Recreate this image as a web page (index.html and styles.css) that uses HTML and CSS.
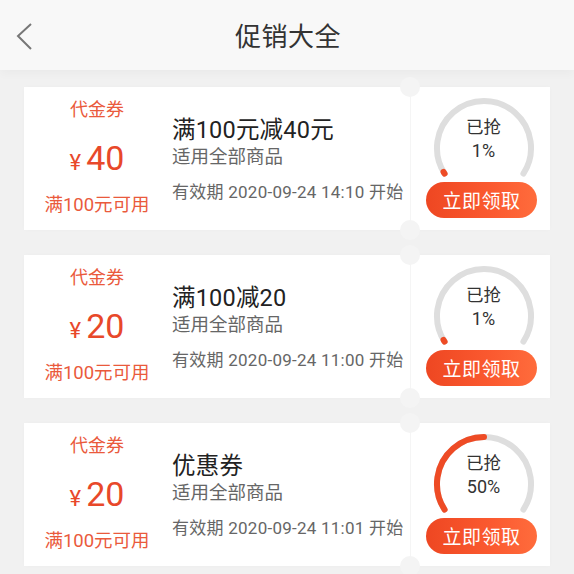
FILE: index.html
```html
<!DOCTYPE html>
<html lang="zh-CN">
<head>
<meta charset="utf-8">
<title>促销大全</title>
<link rel="stylesheet" href="styles.css">
</head>
<body>
<header class="topbar">
  <svg class="back" width="20" height="30" viewBox="0 0 20 30"><polyline points="15,2 2,14 15,27" fill="none" stroke="#777" stroke-width="2"/></svg>
  <h1 class="title">促销大全</h1>
</header>
<main class="list">
  <section class="card">
    <div class="left">
      <div class="kind">代金券</div>
      <div class="price"><span class="yen">¥</span><span class="num">40</span></div>
      <div class="cond">满100元可用</div>
    </div>
    <div class="mid">
      <div class="name">满100元减40元</div>
      <div class="scope">适用全部商品</div>
      <div class="valid">有效期 2020-09-24 14:10 开始</div>
    </div>
    <div class="stub">
      <div class="gauge">
        <svg class="ring" width="106" height="84" viewBox="0 0 106 84">
          <path d="M13.6 78.6 A47 47 0 1 1 92.4 78.6" pathLength="100" fill="none" stroke="#dedede" stroke-width="6" stroke-linecap="round"/>
          <path d="M13.6 78.6 A47 47 0 1 1 92.4 78.6" pathLength="100" fill="none" stroke="#ee4b25" stroke-width="6" stroke-linecap="round" stroke-dasharray="1 200"/>
        </svg>
        <div class="gtext"><span class="g1">已抢</span><span class="g2">1%</span></div>
      </div>
      <button class="btn">立即领取</button>
    </div>
    <i class="notch top"></i><i class="notch bottom"></i>
  </section>

  <section class="card">
    <div class="left">
      <div class="kind">代金券</div>
      <div class="price"><span class="yen">¥</span><span class="num">20</span></div>
      <div class="cond">满100元可用</div>
    </div>
    <div class="mid">
      <div class="name">满100减20</div>
      <div class="scope">适用全部商品</div>
      <div class="valid">有效期 2020-09-24 11:00 开始</div>
    </div>
    <div class="stub">
      <div class="gauge">
        <svg class="ring" width="106" height="84" viewBox="0 0 106 84">
          <path d="M13.6 78.6 A47 47 0 1 1 92.4 78.6" pathLength="100" fill="none" stroke="#dedede" stroke-width="6" stroke-linecap="round"/>
          <path d="M13.6 78.6 A47 47 0 1 1 92.4 78.6" pathLength="100" fill="none" stroke="#ee4b25" stroke-width="6" stroke-linecap="round" stroke-dasharray="1 200"/>
        </svg>
        <div class="gtext"><span class="g1">已抢</span><span class="g2">1%</span></div>
      </div>
      <button class="btn">立即领取</button>
    </div>
    <i class="notch top"></i><i class="notch bottom"></i>
  </section>

  <section class="card">
    <div class="left">
      <div class="kind">代金券</div>
      <div class="price"><span class="yen">¥</span><span class="num">20</span></div>
      <div class="cond">满100元可用</div>
    </div>
    <div class="mid">
      <div class="name">优惠券</div>
      <div class="scope">适用全部商品</div>
      <div class="valid">有效期 2020-09-24 11:01 开始</div>
    </div>
    <div class="stub">
      <div class="gauge">
        <svg class="ring" width="106" height="84" viewBox="0 0 106 84">
          <path d="M13.6 78.6 A47 47 0 1 1 92.4 78.6" pathLength="100" fill="none" stroke="#dedede" stroke-width="6" stroke-linecap="round"/>
          <path d="M13.6 78.6 A47 47 0 1 1 92.4 78.6" pathLength="100" fill="none" stroke="#ee4b25" stroke-width="6" stroke-linecap="round" stroke-dasharray="50 200"/>
        </svg>
        <div class="gtext"><span class="g1">已抢</span><span class="g2">50%</span></div>
      </div>
      <button class="btn">立即领取</button>
    </div>
    <i class="notch top"></i><i class="notch bottom"></i>
  </section>
</main>
</body>
</html>
```

FILE: styles.css
```css
* { box-sizing: border-box; }
html, body { margin: 0; padding: 0; }
body {
  background: #f1f1f1;
  font-family: Roboto, "Noto Sans CJK SC", sans-serif;
  width: 574px;
  height: 574px;
  overflow: hidden;
}
.topbar {
  height: 70px;
  background: #f8f8f8;
  display: flex;
  align-items: center;
  justify-content: center;
  position: relative;
  box-shadow: 0 3px 10px rgba(0,0,0,0.035);
}
.back {
  position: absolute;
  left: 16px;
  top: 22px;
}
.title {
  margin: 0;
  font-family: "Noto Sans CJK SC", sans-serif;
  font-weight: 400;
  font-size: 26px;
  line-height: 30px;
  color: #333;
  letter-spacing: 0.5px;
  padding-left: 2px;
}
.list {
  padding: 17px 24px 0 24px;
  display: flex;
  flex-direction: column;
  gap: 25px;
}
.card {
  position: relative;
  height: 143px;
  background: #fff;
  display: flex;
  box-shadow: 0 0 4px rgba(0,0,0,0.02);
}
.left {
  width: 146px;
  display: flex;
  flex-direction: column;
  align-items: center;
  padding-top: 10px;
  color: #e8502f;
}
.kind {
  font-size: 18px;
  line-height: 26px;
  color: #ea5a3c;
}
.price {
  margin-top: 15px;
  height: 40px;
  line-height: 40px;
  display: flex;
  align-items: baseline;
  gap: 5px;
  color: #e8482a;
}
.yen { font-size: 22px; }
.num { font-size: 34px; }
.cond {
  margin-top: 14px;
  font-size: 18.5px;
  line-height: 26px;
  color: #ea5a3c;
}
.mid {
  width: 240px;
  padding-top: 28px;
  padding-left: 2px;
  display: flex;
  flex-direction: column;
}
.name {
  font-size: 23.5px;
  line-height: 30px;
  color: #222;
  letter-spacing: 0.2px;
}
.scope {
  font-size: 18.5px;
  line-height: 24px;
  color: #666;
}
.valid {
  margin-top: 11px;
  font-size: 17px;
  line-height: 24px;
  color: #666;
  white-space: nowrap;
  letter-spacing: 0.25px;
}
.stub {
  flex: 1;
  border-left: 1px solid #f5f5f5;
  display: flex;
  flex-direction: column;
  align-items: center;
  padding-top: 8px;
  padding-left: 6px;
}
.gauge {
  display: grid;
  width: 106px;
  height: 84px;
}
.ring, .gtext { grid-area: 1 / 1; }
.gtext {
  display: flex;
  flex-direction: column;
  align-items: center;
  padding-top: 20px;
  color: #333;
  font-size: 17.5px;
}
.g1 { line-height: 24px; }
.g2 { line-height: 24px; font-size: 18px; }
.btn {
  margin-top: 3px;
  width: 111px;
  height: 36px;
  border: 0;
  border-radius: 18px;
  background: linear-gradient(90deg, #ee4722 0%, #fb5a30 60%, #ff6c3c 100%);
  color: #fff;
  font-family: "Noto Sans CJK SC", sans-serif;
  font-size: 19px;
  line-height: 36px;
  padding: 0;
  letter-spacing: 0.5px;
  margin-left: -4px;
}
.notch {
  position: absolute;
  left: 376px;
  width: 20px;
  height: 20px;
  border-radius: 50%;
  background: #f4f4f4;
}
.notch.top { top: -10px; }
.notch.bottom { bottom: -10px; }
```
